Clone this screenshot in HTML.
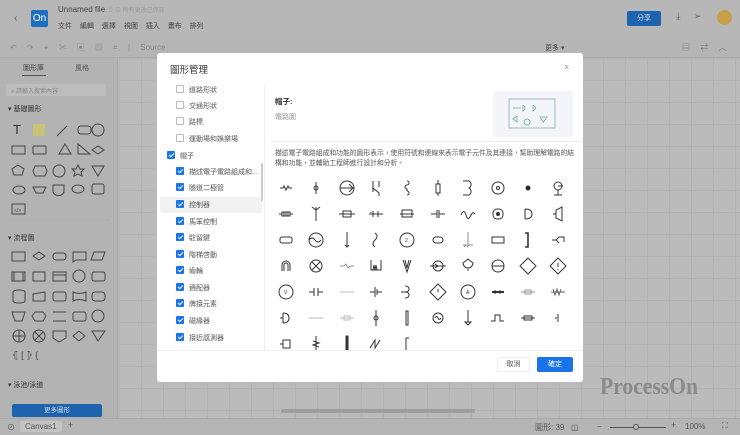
<!DOCTYPE html>
<html><head><meta charset="utf-8"><style>
*{margin:0;padding:0;box-sizing:border-box}
body{width:740px;height:435px;overflow:hidden;position:relative;background:#bababa;font-family:"Liberation Sans","Noto Sans CJK TC",sans-serif;color:#333}
.abs{position:absolute}
.hdr{left:0;top:0;width:740px;height:37px;background:#b7b7b7}
.tb{left:0;top:37px;width:740px;height:21px;background:#b5b5b5;border-bottom:1px solid #aaa}
.side{left:0;top:58px;width:118px;height:360px;background:#b3b3b3;border-right:1px solid #a8a8a8}
.canvas{left:119px;top:58px;width:621px;height:360px;background-color:#bbb;background-image:linear-gradient(#b3b3b3 1px,transparent 1px),linear-gradient(90deg,#b3b3b3 1px,transparent 1px);background-size:22px 22px}
.status{left:0;top:418px;width:740px;height:17px;background:#b5b5b5;border-top:1px solid #aaa;font-size:8px;color:#555}
.dlg{left:157px;top:53px;width:426px;height:329px;background:#fff;border-radius:3px}
.t8{font-size:8px;color:#666}
.cb{position:absolute;width:8px;height:8px;border:1px solid #bbb;border-radius:1px;background:#fff}
.cb.on{background:#1a73e8;border-color:#1a73e8}
.cb.on:after{content:"";position:absolute;left:1.5px;top:0px;width:2px;height:4px;border:solid #fff;border-width:0 1.2px 1.2px 0;transform:rotate(45deg)}
.li{position:absolute;font-size:7px;color:#555;white-space:nowrap}
.mn{font-size:7.5px;color:#333}
</style></head><body>
<div class="abs hdr">
 <div class="abs" style="left:14px;top:13px;font-size:10px;color:#555">&lsaquo;</div>
 <div class="abs" style="left:31px;top:10px;width:17px;height:17px;background:#1d6fbf;border-radius:2px;color:#fff;font-size:10px;line-height:17px;text-align:center">On</div>
 <div class="abs" style="left:58px;top:5px;font-size:8px;color:#444">Unnamed file <span style="color:#999;font-size:6px">☆ ⊙ 所有更改已保存</span></div>
 <div class="abs" style="left:58px;top:21px;font-size:7px;color:#444;word-spacing:6px">文件 編輯 選擇 視圖 插入 畫布 排列</div>
 <div class="abs" style="left:627px;top:11px;width:34px;height:15px;background:#1e63ad;border-radius:2px;color:#dde;font-size:7px;line-height:15px;text-align:center">分享</div>
 <div class="abs" style="left:676px;top:11px;font-size:10px;color:#666">⤓</div>
 <div class="abs" style="left:694px;top:11px;font-size:9px;color:#666">➢</div>
 <div class="abs" style="left:717px;top:10px;width:15px;height:15px;border-radius:50%;background:#c9a04a"></div>
</div>
<div class="abs tb"><div class="abs" style="left:10px;top:5px;font-size:8px;color:#888;word-spacing:8px">↶ ↷ ⌖ ✂ ▣ ▨ ⌗ | Source</div>
<div class="abs" style="left:545px;top:6px;font-size:7px;color:#444">更多 ▾</div>
<div class="abs" style="left:682px;top:5px;font-size:8px;color:#777;word-spacing:8px">▤ ⇄ ︿</div></div>
<div class="abs side">
 <div class="abs" style="left:23px;top:5px;font-size:7px;color:#444">圖形庫</div>
 <div class="abs" style="left:22px;top:17px;width:24px;height:1px;background:#555"></div>
 <div class="abs" style="left:75px;top:5px;font-size:7px;color:#555">風格</div>
 <div class="abs" style="left:6px;top:26px;width:100px;height:12px;background:#bdbdbd;border-radius:2px;font-size:6px;color:#888;padding:2px 5px">⌕ 請輸入搜索內容</div>
 <div class="abs" style="left:8px;top:46px;font-size:7px;color:#333">▾ 基礎圖形</div>
 <svg class="abs" style="left:0;top:58px" width="118" height="300" fill="none" stroke="#444" stroke-width="1">
  <text x="13" y="18" font-size="13" fill="#333" stroke="none" font-family="Liberation Sans">T</text>
  <rect x="33" y="8" width="12" height="12" fill="#cbc27a" stroke="none"/>
  <path d="M57 20L67 10"/><rect x="78" y="10" width="13" height="8" rx="3"/><circle cx="98" cy="14" r="6"/>
  <rect x="12" y="30" width="13" height="8"/><rect x="33" y="30" width="13" height="8" rx="1"/><path d="M59 38L65 28L71 38Z"/><path d="M78 28V38H90Z"/><path d="M92 34L98 30L104 34L98 38Z"/>
  <path d="M18 49L24 53L22 59H14L12 53Z"/><path d="M35 50H45L47 55L45 60H35L33 55Z"/><circle cx="59" cy="55" r="6"/><path d="M78 49L80 53H84L81 56L82 60L78 58L74 60L75 56L72 53H76Z"/><path d="M92 50H104L98 60Z"/>
  <ellipse cx="19" cy="74" rx="6" ry="4"/><path d="M33 71H46L43 77H36Z"/><path d="M53 69H64V76A6 6 0 0 1 53 76Z"/><ellipse cx="78" cy="73" rx="6" ry="4"/><rect x="92" y="68" width="12" height="10" rx="2"/>
  <rect x="12" y="88" width="13" height="10"/><text x="14" y="96" font-size="5" fill="#444" stroke="none">&lt;/&gt;</text>
  <path d="M8 104H110" stroke="#a8a8a8"/>
 </svg>
 <div class="abs" style="left:8px;top:175px;font-size:7px;color:#333">▾ 流程圖</div>
 <svg class="abs" style="left:0;top:190px" width="118" height="160" fill="none" stroke="#444" stroke-width="1">
  <rect x="12" y="4" width="13" height="9"/><path d="M33 8L39 4L45 8L39 12Z"/><rect x="53" y="5" width="13" height="7" rx="3"/><path d="M73 4H86V12H76L73 14Z"/><path d="M94 4H105L102 12H91Z"/>
  <rect x="12" y="24" width="13" height="9"/><path d="M14 24V33M23 24V33"/><rect x="33" y="24" width="12" height="9"/><rect x="53" y="24" width="13" height="9"/><path d="M53 27H66"/><circle cx="79" cy="28" r="6"/><rect x="92" y="24" width="13" height="9" rx="2"/>
  <path d="M13 44V53A6 2 0 0 0 25 53V44A6 2 0 0 0 13 44Z"/><path d="M33 46L45 44V53H33Z"/><rect x="53" y="44" width="13" height="9" rx="2"/><path d="M73 44Q79 47 86 44V53Q79 50 73 53Z"/><rect x="92" y="44" width="13" height="9" rx="3"/>
  <path d="M12 64H25L22 73H15Z"/><path d="M35 64H43L46 68L43 73H35L32 68Z"/><path d="M53 64H66M53 73H66"/><rect x="73" y="64" width="13" height="9" rx="2"/><circle cx="98" cy="68" r="6"/>
  <circle cx="19" cy="88" r="6"/><path d="M13 88H25M19 82V94"/><circle cx="39" cy="88" r="6"/><path d="M35 84L43 92M43 84L35 92"/><path d="M53 83H66V90L59 94L53 90Z"/><path d="M73 88L79 83L85 88L79 93Z"/><path d="M92 83H105L98 93Z"/>
  <text x="12" y="110" font-size="9" fill="#444" stroke="none">⦃  [  ⦄  {</text>
 </svg>
 <div class="abs" style="left:8px;top:322px;font-size:7px;color:#333">▾ 泳池/泳道</div>
 <div class="abs" style="left:12px;top:346px;width:90px;height:13px;background:#1e63ad;border-radius:2px;color:#cdd;font-size:6.5px;line-height:13px;text-align:center">更多圖形</div>
</div>
<div class="abs canvas">
 <div class="abs" style="left:481px;top:316px;font-family:'Liberation Serif',serif;font-size:24px;font-weight:bold;color:#8a8a8a;transform:scaleX(0.9);transform-origin:left">ProcessOn</div>
 <div class="abs" style="left:162px;top:351px;width:194px;height:4px;background:#9e9e9e;border-radius:2px"></div>
</div>
<div class="abs status">
 <div class="abs" style="left:7px;top:3px">⊘</div>
 <div class="abs" style="left:20px;top:2px;background:#c3c3c3;padding:1px 5px;border-radius:2px">Canvas1</div>
 <div class="abs" style="left:68px;top:1px;font-size:9px">+</div>
 <div class="abs" style="left:535px;top:3px">圖形: 39 &nbsp; ◫</div>
 <div class="abs" style="left:597px;top:3px">−</div>
 <div class="abs" style="left:610px;top:8px;width:56px;height:1px;background:#555"></div>
 <div class="abs" style="left:633px;top:5px;width:6px;height:6px;border-radius:50%;background:#bbb;border:1px solid #555"></div>
 <div class="abs" style="left:671px;top:1px;font-size:9px">+</div>
 <div class="abs" style="left:685px;top:3px">100%</div>
 <div class="abs" style="left:722px;top:2px">⛶</div>
</div>

<div class="abs dlg">
 <div class="abs" style="left:13px;top:9px;font-size:9.5px;color:#333">圖形管理</div>
 <div class="abs" style="left:407px;top:9px;font-size:9px;color:#999">×</div>
 <div class="abs" style="left:3px;top:144px;width:102px;height:16px;background:#f2f2f2;border-radius:2px"></div>
 <div class="abs" style="left:104px;top:110px;width:2px;height:38px;background:#ccc;border-radius:1px"></div>
 <div class="abs" style="left:107px;top:32px;width:1px;height:266px;background:#eee"></div>
 <!-- list -->
 <div class="cb" style="left:19px;top:32px"></div><div class="li" style="left:32px;top:32px">道路形狀</div>
 <div class="cb" style="left:19px;top:48px"></div><div class="li" style="left:32px;top:48px">交通形狀</div>
 <div class="cb" style="left:19px;top:64px"></div><div class="li" style="left:32px;top:64px">路標</div>
 <div class="cb" style="left:19px;top:81px"></div><div class="li" style="left:32px;top:81px">運動場和娛樂場</div>
 <div class="cb on" style="left:10px;top:98px"></div><div class="li" style="left:23px;top:98px">帽子</div>
 <div class="cb on" style="left:19px;top:114px"></div><div class="li" style="left:32px;top:114px">描述電子電路組成和...</div>
 <div class="cb on" style="left:19px;top:130px"></div><div class="li" style="left:32px;top:130px">隧道二極管</div>
 <div class="cb on" style="left:19px;top:147px"></div><div class="li" style="left:32px;top:147px">控制器</div>
 <div class="cb on" style="left:19px;top:164px"></div><div class="li" style="left:32px;top:164px">馬笨控制</div>
 <div class="cb on" style="left:19px;top:180px"></div><div class="li" style="left:32px;top:180px">駐留鍵</div>
 <div class="cb on" style="left:19px;top:197px"></div><div class="li" style="left:32px;top:197px">階梯啓動</div>
 <div class="cb on" style="left:19px;top:213px"></div><div class="li" style="left:32px;top:213px">齒輪</div>
 <div class="cb on" style="left:19px;top:230px"></div><div class="li" style="left:32px;top:230px">適配器</div>
 <div class="cb on" style="left:19px;top:246px"></div><div class="li" style="left:32px;top:246px">牌接元素</div>
 <div class="cb on" style="left:19px;top:263px"></div><div class="li" style="left:32px;top:263px">磁緣器</div>
 <div class="cb on" style="left:19px;top:280px"></div><div class="li" style="left:32px;top:280px">接近感測器</div>
 <!-- right -->
 <div class="abs" style="left:118px;top:43px;font-size:7.5px;color:#333;font-weight:bold">帽子:</div>
 <div class="abs" style="left:118px;top:59px;font-size:7px;color:#999">電路圖</div>
 <div class="abs" style="left:336px;top:38px;width:80px;height:46px;background:#f3f5f8;border-radius:2px">
  <svg width="80" height="46" fill="none" stroke="#7aa" stroke-width=".8"><rect x="16" y="8" width="46" height="29" stroke="#8ab"/><path d="M20 17h8M30 14v6q4-3 0-6M40 14v6q5-3 0-6M20 28l4-3v6zM34 28a3 3 0 1 0 .1 0M47 26h7l-3.5 5z"/></svg>
 </div>
 <div class="abs" style="left:113px;top:88px;width:312px;height:1px;background:#eee"></div>
 <div class="abs" style="left:118px;top:96px;width:300px;font-size:6.8px;line-height:9.5px;color:#555">描述電子電路組成和功能的圖形表示，使用符號和連線來表示電子元件及其連接，幫助理解電路的結構和功能，並輔助工程師進行設計和分析。</div>
 <svg class="abs" style="left:113px;top:120px" width="300" height="178" fill="none" stroke="#333" stroke-width="1">
  <g transform="translate(16,15)">
   <path d="M-6 0h3l1-2 2 4 2-4 1 2h3"/>
   <path transform="translate(30,0)" d="M0-6v12M-2 0a2 2 0 1 0 4 0a2 2 0 1 0-4 0"/>
   <g transform="translate(61,0)"><circle r="7"/><path d="M-7 0h14M2-4l4 4-4 4"/></g>
   <path transform="translate(90,0)" d="M-3-7v11M-3 0l6 5v3M3-7v6"/>
   <path transform="translate(121,0)" d="M0-7a2 2 0 1 1 0 4a2 2 0 1 0 0 4v2M0 3a2 2 0 1 1 0 4"/>
   <path transform="translate(152,0)" d="M-2-4h4v9h-4zM0-8v4M0 5v3"/>
   <path transform="translate(182,0)" d="M-5-7h6a4 4 0 0 1 0 7a4 4 0 0 1 0 7h-6"/>
   <g transform="translate(212,0)"><circle r="6"/><circle r="1.5"/></g>
   <circle cx="242" cy="0" r="2" fill="#222"/>
   <g transform="translate(272,0)"><circle cy="-2" r="4"/><path d="M0 2v5M-4 7h8M0-2h5"/></g>
  </g>
  <g transform="translate(16,41)">
   <path d="M-7 0h3M4 0h3M-4-2h8v4h-8zM-2-2v4M0-2v4M2-2v4"/>
   <path transform="translate(30,0)" d="M0-7v14M-4-7l4 3 4-3"/>
   <path transform="translate(61,0)" d="M-8 0h16M-4-3h8v6h-8z"/>
   <path transform="translate(90,0)" d="M-7 0h14M-3-3v6M2-3v6M-5-2v1"/>
   <path transform="translate(121,0)" d="M-7 0h14M-5-4h10v7h-10z"/>
   <path transform="translate(152,0)" d="M-7 0h6M1 0h6M-1-4v8M1-4v8"/>
   <path transform="translate(182,0)" d="M-7 1q3-7 5 0t5 0q2-4 4-1"/>
   <g transform="translate(212,0)"><rect x="-5" y="-5" width="10" height="10" rx="4"/><circle r="1.5" fill="#333"/></g>
   <path transform="translate(242,0)" d="M-3-5v10M-3-5q7 0 7 5t-7 5"/>
   <path transform="translate(272,0)" d="M-5 0h3M-2-4v8l6 3v-14z"/>
  </g>
  <g transform="translate(16,67)">
   <rect x="-6" y="-3" width="12" height="6" rx="2"/>
   <g transform="translate(30,0)"><circle r="7"/><path d="M-7 0q3-4 6 0t6 0"/></g>
   <path transform="translate(61,0)" d="M0-8v14M-2 5l2 2 2-2"/>
   <path transform="translate(90,0)" d="M-1-7q4 3 0 7t0 7"/>
   <g transform="translate(121,0)"><circle r="7"/><text x="-2" y="2" font-size="5" fill="#333" stroke="none">2</text></g>
   <rect x="147" y="-3" width="10" height="6" rx="3"/>
   <path transform="translate(182,0)" d="M0-8v12M-5 5h10M-4 7l2-2M-1 7l2-2" stroke="#888"/>
   <rect x="206" y="-3" width="12" height="6"/>
   <path transform="translate(242,0)" d="M-3-7h3v14h-3" stroke-width="1.6"/>
   <path transform="translate(272,0)" d="M-6 0h4l3-3h5v5M-2 0l3 3"/>
  </g>
  <g transform="translate(16,93)">
   <path d="M-4 5v-6a4 4 0 0 1 8 0v6M-2 5v-6a2 2 0 0 1 4 0v6"/>
   <g transform="translate(30,0)"><circle r="6"/><path d="M-4-4l8 8M4-4l-8 8"/></g>
   <path transform="translate(61,0)" d="M-7 0h4l2-2 2 4 2-2h4" stroke="#999"/>
   <path transform="translate(90,0)" d="M-5-6v10h10v-10M-3 4l1-5 1 5 1-5 1 5"/>
   <path transform="translate(121,0)" d="M-4-6l4 12 4-12M-2-6l2 8 2-8"/>
   <g transform="translate(152,0)"><circle r="5"/><path d="M-8 0h16M-3-2l3 2-3 2"/></g>
   <path transform="translate(182,0)" d="M0 5v-2M-5-3a5 5 0 0 0 10 0l-5-4z"/>
   <g transform="translate(212,0)"><circle r="6"/><path d="M-6 0h12"/></g>
   <path transform="translate(242,0)" d="M0-8l8 8-8 8-8-8z"/>
   <path transform="translate(272,0)" d="M0-8l8 8-8 8-8-8zM0-3v4M0 3v1"/>
  </g>
  <g transform="translate(16,119)">
   <g><circle r="7"/><text x="-2" y="2" font-size="5" fill="#333" stroke="none">V</text></g>
   <path transform="translate(30,0)" d="M-7 0h5M2 0h5M-2-4v8M2-4v8"/>
   <path transform="translate(61,0)" d="M-7 0h14" stroke="#bbb"/>
   <path transform="translate(90,0)" d="M-6 0h5M1 0h5M-1-5v10M1-3v6"/>
   <path transform="translate(121,0)" d="M-6 0h4M-2-6q4 0 4 3t-4 3q4 0 4 3t-4 3"/>
   <path transform="translate(152,0)" d="M0-8l8 8-8 8-8-8zM0-3v3"/>
   <g transform="translate(182,0)"><circle r="7"/><text x="-2" y="2" font-size="5" fill="#333" stroke="none">A</text></g>
   <path transform="translate(212,0)" d="M-6 0h12M-3-1.5v3M2-1.5v3" stroke-width="2"/>
   <path transform="translate(242,0)" d="M-7 0h14M-3-2h6v4h-6z" stroke="#999"/>
   <path transform="translate(272,0)" d="M-7 0h14M-5-3l2 6 2-6 2 6 2-6" stroke="#666"/>
  </g>
  <g transform="translate(16,145)">
   <path d="M-6 0h3M-3-5v10M-3-5q6 0 6 5t-6 5"/>
   <path transform="translate(30,0)" d="M-7 0h14" stroke="#bbb"/>
   <path transform="translate(61,0)" d="M-7 0h14M-3-2h6v4h-6z" stroke="#bbb"/>
   <path transform="translate(90,0)" d="M0-8v16M-2 0a2 2 0 1 0 4 0a2 2 0 1 0-4 0"/>
   <path transform="translate(121,0)" d="M-1-7h2v14h-2z"/>
   <g transform="translate(152,0)"><circle r="5"/><path d="M-3 0q1.5-3 3 0t3 0"/></g>
   <path transform="translate(182,0)" d="M0-8v12M-3 4h6l-3 3z"/>
   <path transform="translate(212,0)" d="M-7 3h4v-6h5v6h4"/>
   <path transform="translate(242,0)" d="M-7 0h14M-4-2h8v4h-8z"/>
   <path transform="translate(272,0)" d="M0-4v8M-3 0h2"/>
  </g>
  <g transform="translate(16,171)">
   <path d="M-6 0h3M-3-4h7v8h-7z"/>
   <path transform="translate(30,0)" d="M0-8v16M-3-3l6 2-6 2 6 2"/>
   <path transform="translate(61,0)" d="M-1-8h2v16h-2z" fill="#333"/>
   <path transform="translate(90,0)" d="M-6 4l5-8v8l5-8"/>
   <path transform="translate(121,0)" d="M2-6h-3v12"/>
  </g>
 </svg>
 <div class="abs" style="left:0;top:297px;width:426px;height:1px;background:#f0f0f0"></div>
 <div class="abs" style="left:340px;top:304px;width:33px;height:15px;border:1px solid #eee;border-radius:2px;font-size:7px;color:#555;line-height:13px;text-align:center">取消</div>
 <div class="abs" style="left:380px;top:304px;width:36px;height:15px;background:#1a73e8;border-radius:2px;font-size:7px;color:#fff;line-height:15px;text-align:center">確定</div>
</div>
</body></html>
